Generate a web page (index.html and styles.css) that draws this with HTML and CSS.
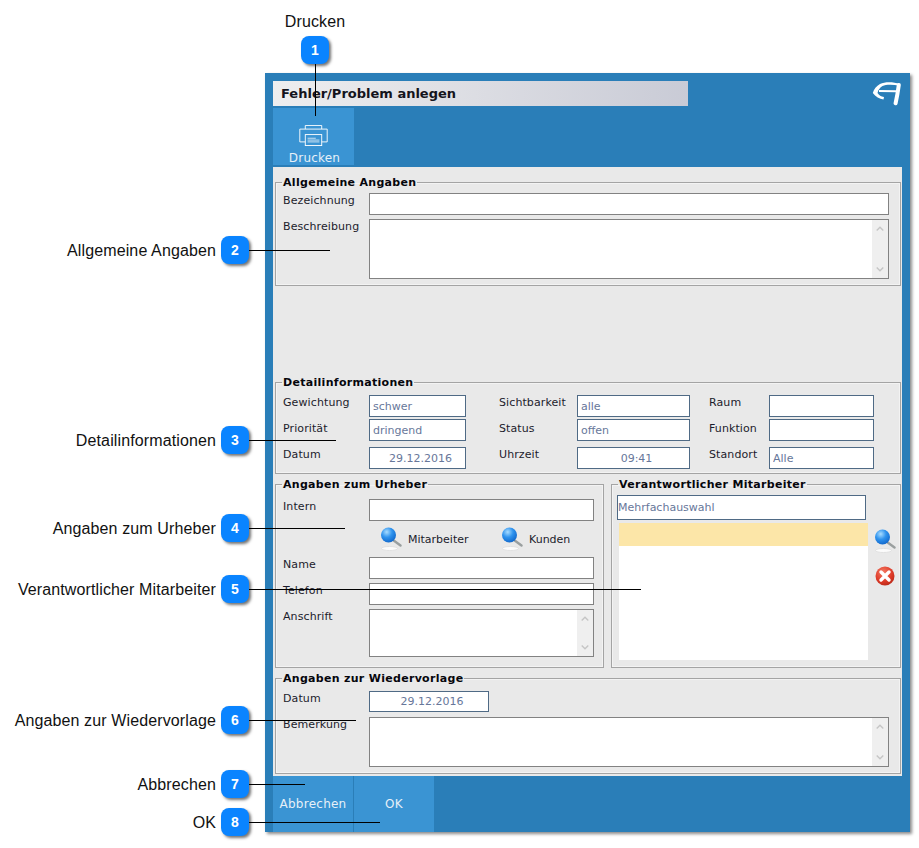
FILE: index.html
```html
<!DOCTYPE html>
<html lang="de">
<head>
<meta charset="utf-8">
<title>Fehler/Problem anlegen</title>
<link rel="stylesheet" href="styles.css">
</head>
<body>
<svg class="defs" width="0" height="0" aria-hidden="true">
  <defs>
    <radialGradient id="lens" cx="0.38" cy="0.3" r="0.8">
      <stop offset="0" stop-color="#a8dcff"/>
      <stop offset="0.45" stop-color="#2f93ee"/>
      <stop offset="1" stop-color="#0b5fc4"/>
    </radialGradient>
    <radialGradient id="redball" cx="0.4" cy="0.3" r="0.8">
      <stop offset="0" stop-color="#f47a64"/>
      <stop offset="0.6" stop-color="#dd3a28"/>
      <stop offset="1" stop-color="#b02414"/>
    </radialGradient>
    <symbol id="search" viewBox="0 0 22 25">
      <ellipse cx="9.500" cy="21.500" rx="8" ry="2" fill="#fbfbfb" stroke="#dcdcdc" stroke-width="0.800"/>
      <path d="M13 13 L20.500 18.500" stroke="#9a9f9f" stroke-width="2.400" stroke-linecap="round"/>
      <circle cx="8.500" cy="8" r="7.500" fill="url(#lens)"/>
    </symbol>
    <symbol id="chev-up" viewBox="0 0 8 5"><path d="M0.700 4.500 L4 1.200 L7.300 4.500" fill="none" stroke="#c6c6c6" stroke-width="1.400"/></symbol>
    <symbol id="chev-down" viewBox="0 0 8 5"><path d="M0.700 0.500 L4 3.800 L7.300 0.500" fill="none" stroke="#c6c6c6" stroke-width="1.400"/></symbol>
  </defs>
</svg>

<main class="window">
  <header class="head">
    <h1 class="title">Fehler/Problem anlegen</h1>
    <svg class="logo" viewBox="0 0 29 25" aria-hidden="true">
      <path d="M28 3 C21 0.800 13 0.600 8 3 C4.500 4.800 1.800 8.500 0.800 12 C3.500 15.500 7.500 18 11.500 18.600 L12 16 C9 15.500 7 14.200 5.500 12 C6 9 8 6.500 10.500 5 C14 3.500 21 3.500 27.500 4.800 Z" fill="#fff"/>
      <path d="M7 10 L24.500 10.300" fill="none" stroke="#fff" stroke-width="2"/>
      <path d="M26.800 4 C26 10 24.800 17 23.600 22.300" fill="none" stroke="#fff" stroke-width="4" stroke-linecap="round"/>
    </svg>
  </header>
  <div class="toolbar">
    <button class="tool" type="button">
      <svg class="printer" viewBox="0 0 31 23" aria-hidden="true">
        <path d="M6.500 4.500 V0.500 H24.500 V4.500" fill="none" stroke="#fff"/>
        <path d="M6.500 18.500 H0.500 V4.500 H30.500 V18.500 H24.500" fill="none" stroke="#fff"/>
        <rect x="6.500" y="10.500" width="18" height="12" fill="none" stroke="#fff"/>
        <path d="M9 14.500 H18 M9 16.500 H22 M9 18.500 H22" stroke="#fff" stroke-width="0.800"/>
      </svg>
      <span class="tool-text">Drucken</span>
    </button>
  </div>

  <div class="content">
    <fieldset class="group general">
      <legend>Allgemeine Angaben</legend>
      <div class="form-grid">
        <label class="lbl">Bezeichnung</label>
        <input class="field" type="text">
        <label class="lbl">Beschreibung</label>
        <div class="area h60"><div class="scroll"><svg class="chev"><use href="#chev-up"/></svg><svg class="chev"><use href="#chev-down"/></svg></div></div>
      </div>
    </fieldset>

    <fieldset class="group details">
      <legend>Detailinformationen</legend>
      <div class="detail-grid">
        <label class="lbl">Gewichtung</label><input class="field blue" type="text" value="schwer">
        <label class="lbl col2">Sichtbarkeit</label><input class="field blue" type="text" value="alle">
        <label class="lbl col3">Raum</label><input class="field blue" type="text">
        <label class="lbl mid">Priorität</label><input class="field blue" type="text" value="dringend">
        <label class="lbl col2 mid">Status</label><input class="field blue" type="text" value="offen">
        <label class="lbl col3 mid">Funktion</label><input class="field blue" type="text">
        <label class="lbl">Datum</label><input class="field blue center" type="text" value="29.12.2016">
        <label class="lbl col2">Uhrzeit</label><input class="field blue center" type="text" value="09:41">
        <label class="lbl col3">Standort</label><input class="field blue" type="text" value="Alle">
      </div>
    </fieldset>

    <div class="split">
      <fieldset class="group origin">
        <legend>Angaben zum Urheber</legend>
        <div class="origin-grid">
          <label class="lbl">Intern</label>
          <input class="field" type="text">
          <div class="lookups">
            <span class="lookup mit"><svg class="search"><use href="#search"/></svg>Mitarbeiter</span>
            <span class="lookup"><svg class="search"><use href="#search"/></svg>Kunden</span>
          </div>
          <label class="lbl">Name</label>
          <input class="field" type="text">
          <label class="lbl">Telefon</label>
          <input class="field" type="text">
          <label class="lbl">Anschrift</label>
          <div class="area h48"><div class="scroll"><svg class="chev"><use href="#chev-up"/></svg><svg class="chev"><use href="#chev-down"/></svg></div></div>
        </div>
      </fieldset>

      <fieldset class="group owner">
        <legend>Verantwortlicher Mitarbeiter</legend>
        <input class="field blue multi" type="text" value="Mehrfachauswahl">
        <div class="owner-row">
          <div class="list"><div class="list-sel"></div></div>
          <div class="side-icons">
            <svg class="search"><use href="#search"/></svg>
            <svg class="remove" viewBox="0 0 20 20" aria-hidden="true">
              <circle cx="10" cy="10" r="9.500" fill="url(#redball)"/>
              <path d="M6 6 L14 14 M14 6 L6 14" stroke="#fff" stroke-width="3.400" stroke-linecap="round"/>
            </svg>
          </div>
        </div>
      </fieldset>
    </div>

    <fieldset class="group resub">
      <legend>Angaben zur Wiedervorlage</legend>
      <div class="resub-grid">
        <label class="lbl">Datum</label>
        <input class="field blue center date" type="text" value="29.12.2016">
        <label class="lbl">Bemerkung</label>
        <div class="area h50"><div class="scroll"><svg class="chev"><use href="#chev-up"/></svg><svg class="chev"><use href="#chev-down"/></svg></div></div>
      </div>
    </fieldset>
  </div>

  <footer class="foot">
    <button class="action" type="button">Abbrechen</button>
    <button class="action" type="button">OK</button>
  </footer>
</main>

<div class="note-top">
  <span class="note-label">Drucken</span>
  <span class="badge">1</span>
  <span class="leader-v"></span>
</div>
<div class="note n2"><span class="note-label">Allgemeine Angaben</span><span class="badge">2</span><span class="leader"></span></div>
<div class="note n3"><span class="note-label">Detailinformationen</span><span class="badge">3</span><span class="leader"></span></div>
<div class="note n4"><span class="note-label">Angaben zum Urheber</span><span class="badge">4</span><span class="leader"></span></div>
<div class="note n5"><span class="note-label">Verantwortlicher Mitarbeiter</span><span class="badge">5</span><span class="leader"></span></div>
<div class="note n6"><span class="note-label">Angaben zur Wiedervorlage</span><span class="badge">6</span><span class="leader"></span></div>
<div class="note n7"><span class="note-label">Abbrechen</span><span class="badge">7</span><span class="leader"></span></div>
<div class="note n8"><span class="note-label">OK</span><span class="badge">8</span><span class="leader"></span></div>
</body>
</html>
```

FILE: styles.css
```css
* { box-sizing: border-box; }

html, body {
  margin: 0;
  padding: 0;
  background: #fff;
}

body {
  position: relative;
  width: 919px;
  height: 848px;
  overflow: hidden;
  padding: 73px 0 0 265px;
  font-family: "DejaVu Sans", Verdana, sans-serif;
  font-size: 11px;
  color: #1c1c2c;
}

.defs { position: absolute; }

/* window */
.window {
  display: flex;
  flex-direction: column;
  width: 645px;
  height: 759px;
  padding: 8px 8px 0;
  background: #2a7eb8;
  box-shadow: 2px 2px 3px #8a8a8a;
}

.head {
  display: flex;
  justify-content: space-between;
  align-items: flex-start;
  height: 25px;
}

.title {
  width: 415px;
  height: 25px;
  margin: 0;
  padding-left: 8px;
  background: linear-gradient(90deg, #eeeeef, #c9cbd6);
  font-size: 13px;
  font-weight: bold;
  line-height: 25px;
  color: #14141c;
}

.logo {
  width: 29px;
  height: 25px;
  margin-right: 1px;
}

.toolbar {
  display: flex;
  height: 57px;
  margin: 2px 0;
}

.tool {
  display: flex;
  flex-direction: column;
  align-items: center;
  width: 81px;
  height: 57px;
  padding: 17px 0 0;
  border: 0;
  background: #3a94d3;
  color: #e6f0f8;
  font: 12px/14px "DejaVu Sans", Verdana, sans-serif;
  letter-spacing: .2px;
}

.printer {
  width: 31px;
  height: 23px;
  margin-bottom: 5px;
}

.tool-text { padding-left: 2px; }

/* content */
.content {
  display: flex;
  flex-direction: column;
  height: 609px;
  padding: 8px 1px 0 2px;
  background: #e9e9e9;
}

.group {
  min-width: 0;
  margin: 0;
  padding: 0;
  border: 1px solid #a4a4a4;
  box-shadow: inset 0 0 0 1px #f3f3f3;
}

.group legend {
  height: 14px;
  margin-left: -1px;
  padding: 0 1px;
  font-size: 11px;
  font-weight: bold;
  line-height: 16px;
  letter-spacing: .3px;
  color: #06060c;
}

.general { height: 111px; padding: 4px 11px 0 7px; }
.details { height: 99px; margin-top: 89px; padding: 6px 0 0 7px; }
.split { display: flex; gap: 7px; margin-top: 3px; }
.origin { width: 329px; height: 191px; padding: 8px 9px 0 7px; }
.owner { width: 290px; height: 191px; padding: 4px 0 0 5px; }
.owner legend { margin-left: 1px; }
.resub { height: 103px; margin-top: 3px; padding: 6px 11px 0 7px; }

.lbl {
  display: block;
  padding-top: 1px;
  line-height: 14px;
  letter-spacing: .1px;
  white-space: nowrap;
}

.form-grid {
  display: grid;
  grid-template-columns: 86px 1fr;
  row-gap: 4px;
}

.detail-grid {
  display: grid;
  grid-template-columns: 86px 97px 33px 78px 113px 19px 60px 105px;
  grid-template-rows: 24px 28px 22px;
}

.col2 { grid-column: 4; }
.col3 { grid-column: 7; }
.mid { margin-top: 2px; }

.origin-grid {
  display: grid;
  grid-template-columns: 86px 1fr;
  row-gap: 4px;
}

.resub-grid {
  display: grid;
  grid-template-columns: 86px 1fr;
  grid-template-rows: 21px 50px;
  row-gap: 5px;
}

/* fields */
.field {
  display: block;
  width: 100%;
  height: 22px;
  margin: 0;
  padding: 0 3px;
  border: 1px solid #828282;
  border-radius: 0;
  outline: 0;
  background: #fff;
  font: 11px "DejaVu Sans", Verdana, sans-serif;
  color: #67779a;
}

.blue { border-color: #4f6a85; }
.center { padding-left: 9px; text-align: center; }
.date { width: 120px; height: 21px; }

.multi {
  width: 249px;
  height: 25px;
  padding: 0;
}

.area {
  display: flex;
  justify-content: flex-end;
  border: 1px solid #828282;
  background: #fff;
}

.h60 { height: 60px; }
.h48 { height: 48px; }
.h50 { height: 50px; }

.scroll {
  display: flex;
  flex-direction: column;
  justify-content: space-between;
  align-items: center;
  width: 16px;
  padding: 6px 0;
  background: #efefef;
}

.chev {
  display: block;
  width: 8px;
  height: 5px;
}

/* lookups */
.lookups {
  display: flex;
  grid-column: 1 / -1;
  align-items: center;
  height: 28px;
  padding-left: 97px;
}

.lookup {
  display: flex;
  align-items: center;
  gap: 5px;
  height: 26px;
  white-space: nowrap;
}

.lookup .search { margin-right: 1px; }

.mit { width: 121px; }

.search {
  display: block;
  width: 22px;
  height: 25px;
}

.owner-row { display: flex; margin-top: 3px; }

.list {
  width: 249px;
  height: 137px;
  margin-left: 2px;
  background: #fff;
}

.list-sel { height: 23px; background: #fce6a8; }

.side-icons {
  display: flex;
  flex-direction: column;
  align-items: flex-start;
  gap: 12px;
  padding: 6px 0 0 6px;
}

.remove {
  display: block;
  width: 20px;
  height: 20px;
  margin-left: 1px;
}

/* footer */
.foot { display: flex; gap: 1px; height: 56px; }

.action {
  width: 80px;
  height: 56px;
  padding: 0;
  border: 0;
  background: #3a94d3;
  color: #e6f0f8;
  font: 12px "DejaVu Sans", Verdana, sans-serif;
  letter-spacing: .25px;
}

/* annotations laid over the screenshot */
.note {
  position: absolute;
  left: 0;
  display: flex;
  justify-content: flex-end;
  align-items: center;
  gap: 5px;
  width: 249px;
  height: 28px;
}

.n2 { top: 236px; }
.n3 { top: 426px; }
.n4 { top: 514px; }
.n5 { top: 575px; }
.n6 { top: 706px; }
.n7 { top: 770px; }
.n8 { top: 808px; }

.note-label {
  padding-top: 2px;
  font: 16px "Liberation Sans", Arial, sans-serif;
  letter-spacing: .12px;
  color: #111;
  white-space: nowrap;
}

.badge {
  flex: none;
  width: 28px;
  height: 28px;
  border-radius: 8px;
  background: #0a84ff;
  box-shadow: 2px 2px 3px rgba(0, 0, 0, .55);
  font: bold 14px/28px "Liberation Sans", Arial, sans-serif;
  color: #fff;
  text-align: center;
}

.leader {
  position: absolute;
  top: 14px;
  left: 249px;
  height: 1px;
  background: #000;
}

.n2 .leader { width: 81px; }
.n3 .leader { width: 87px; }
.n4 .leader { width: 96px; }
.n5 .leader { width: 392px; }
.n6 .leader { width: 107px; }
.n7 .leader { width: 56px; }
.n8 .leader { width: 131px; }

.note-top {
  position: absolute;
  top: 11px;
  left: 275px;
  display: flex;
  flex-direction: column;
  align-items: center;
  width: 80px;
}

.note-top .note-label { line-height: 18px; }
.note-top .badge { margin-top: 5px; }

.leader-v {
  width: 1px;
  height: 52px;
  background: #000;
}
```
